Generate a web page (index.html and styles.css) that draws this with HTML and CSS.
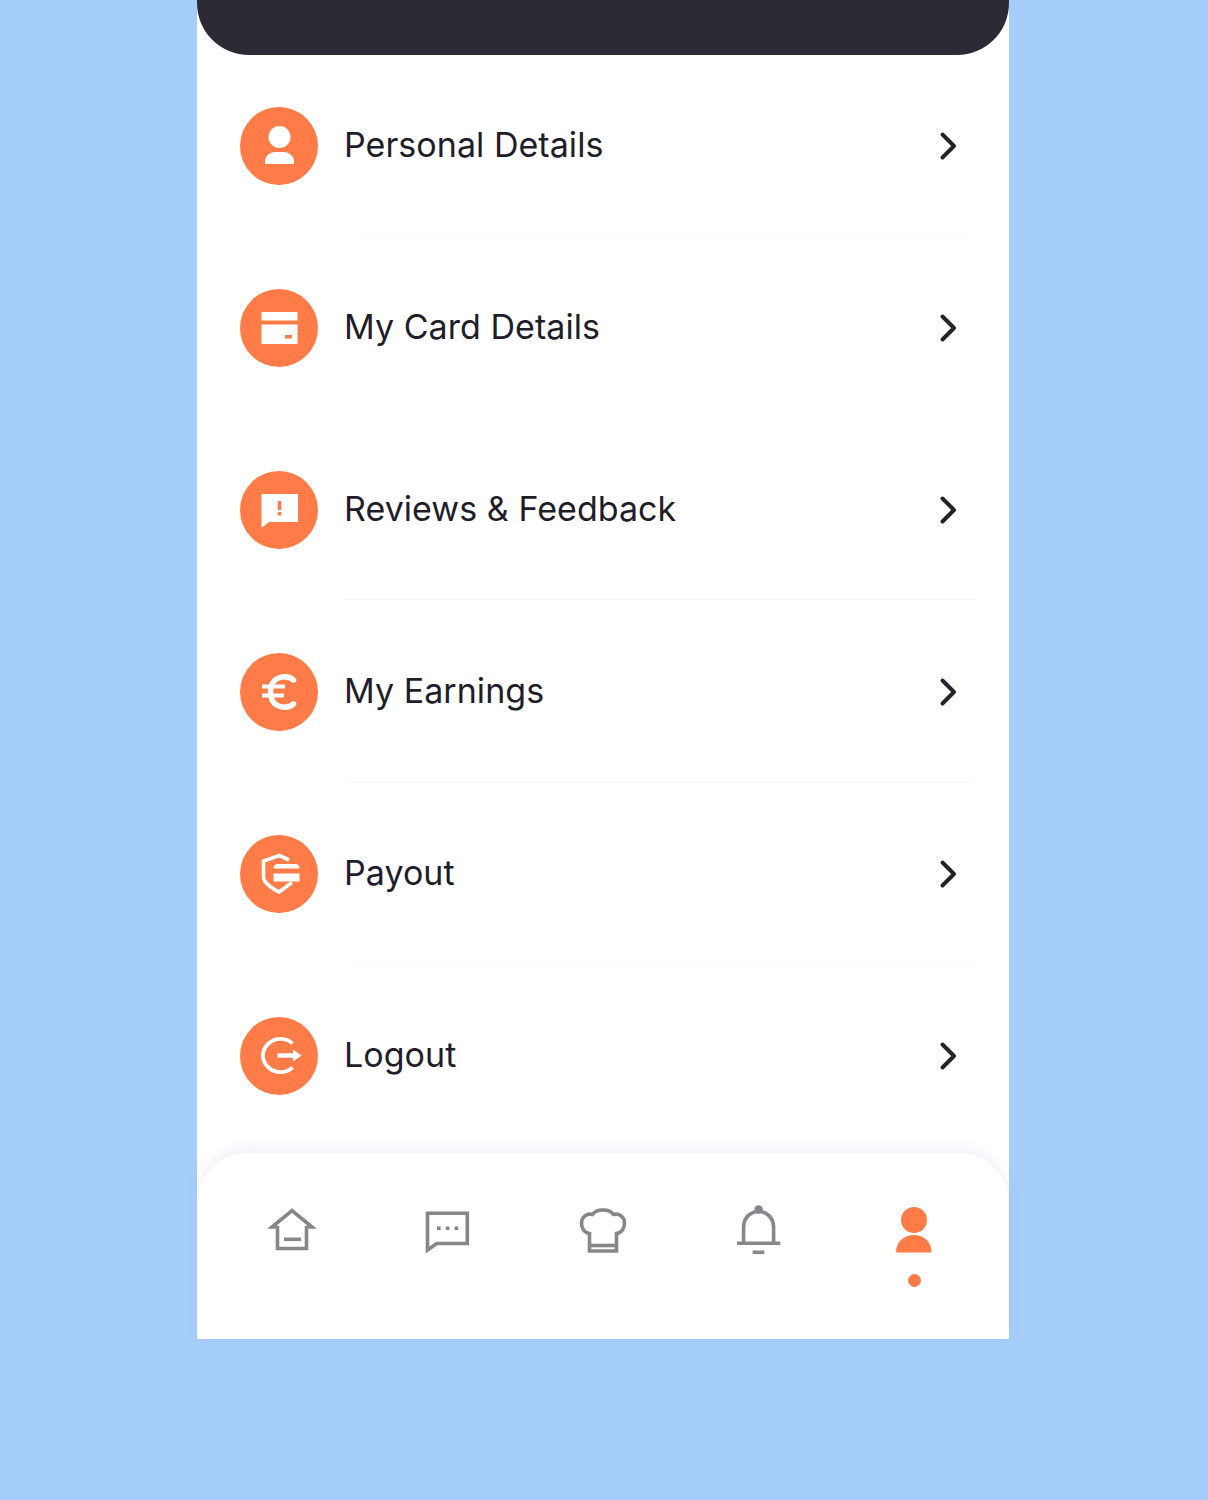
FILE: index.html
```html
<!DOCTYPE html>
<html lang="en">
<head>
    <meta charset="UTF-8">
    <meta name="viewport" content="width=device-width, initial-scale=1.0">
    <title>Profile</title>
    <link rel="stylesheet" href="styles.css">
</head>
<body>

    <div class="phone">
        <!-- TOP BAR -->
        <header class="top-bar"></header>

        <!-- MENU -->
        <main class="menu">
            <a href="#" class="menu-row">
                <span class="menu-icon">
                    <svg viewBox="0 0 78 78">
                        <circle cx="39.5" cy="30" r="11" fill="#fff"/>
                        <path d="M25 57V54C25 49 30 45 35 45H44C49 45 54 49 54 54V57Z" fill="#fff"/>
                    </svg>
                </span>
                <span class="menu-label">Personal Details</span>
                <svg class="chevron" viewBox="0 0 20 30"><path d="M4.5 3.5L16 15L4.5 26.5"/></svg>
            </a>
            <div class="divider divider-personal"></div>

            <a href="#" class="menu-row">
                <span class="menu-icon">
                    <svg viewBox="0 0 78 78">
                        <path d="M21.500 23H57.500V31.500H21.500Z" fill="#fff"/>
                        <path fill-rule="evenodd" d="M21.500 35.500H57.500V55H21.500ZM45 46V49.500H52V46Z" fill="#fff"/>
                    </svg>
                </span>
                <span class="menu-label">My Card Details</span>
                <svg class="chevron" viewBox="0 0 20 30"><path d="M4.5 3.5L16 15L4.5 26.5"/></svg>
            </a>
            <div class="divider divider-none"></div>

            <a href="#" class="menu-row">
                <span class="menu-icon">
                    <svg viewBox="0 0 78 78">
                        <path fill-rule="evenodd" d="M21.500 23H58V51H29L21.500 57ZM37.700 30V39H41.300V30ZM37.700 41V44.500H41.300V41Z" fill="#fff"/>
                    </svg>
                </span>
                <span class="menu-label">Reviews &amp; Feedback</span>
                <svg class="chevron" viewBox="0 0 20 30"><path d="M4.5 3.5L16 15L4.5 26.5"/></svg>
            </a>
            <div class="divider divider-reviews"></div>

            <a href="#" class="menu-row">
                <span class="menu-icon">
                    <svg viewBox="0 0 78 78">
                        <g fill="none" stroke="#fff" stroke-width="5.600">
                            <path d="M53.500 27C50 23.500 42 22.500 36.500 26C28.500 31 28.500 47 36.500 52C42 55.500 50 54.500 53.500 51" stroke-linecap="round"/>
                            <path d="M22 33.500H45M22 42.500H44" stroke-width="4"/>
                        </g>
                    </svg>
                </span>
                <span class="menu-label">My Earnings</span>
                <svg class="chevron" viewBox="0 0 20 30"><path d="M4.5 3.5L16 15L4.5 26.5"/></svg>
            </a>
            <div class="divider divider-earnings"></div>

            <a href="#" class="menu-row">
                <span class="menu-icon">
                    <svg viewBox="0 0 78 78">
                        <path d="M49 25L39.500 20.500L23.500 26V42C23.500 48 32 53 39 57L52 47.500" fill="none" stroke="#fff" stroke-width="3.600"/>
                        <path d="M33.500 33.500C33.500 30.500 35 29 38 29H56C58 29 59.500 31 59.500 33.500Z" fill="#fff"/>
                        <path d="M33.500 38.500H59.500V46.500H33.500Z" fill="#fff"/>
                    </svg>
                </span>
                <span class="menu-label">Payout</span>
                <svg class="chevron" viewBox="0 0 20 30"><path d="M4.5 3.5L16 15L4.5 26.5"/></svg>
            </a>
            <div class="divider divider-payout"></div>

            <a href="#" class="menu-row">
                <span class="menu-icon">
                    <svg viewBox="0 0 78 78">
                        <path d="M52.500 26.500C46 20 35 20.500 28.500 26.500C21 33.500 21 43.500 28.500 50.500C35 56.500 46 57 52.500 50.500" fill="none" stroke="#fff" stroke-width="3.800"/>
                        <path d="M37.500 36.300H53V32.500L61.500 38.500L53 44.500V40.700H37.500Z" fill="#fff"/>
                    </svg>
                </span>
                <span class="menu-label">Logout</span>
                <svg class="chevron" viewBox="0 0 20 30"><path d="M4.5 3.5L16 15L4.5 26.5"/></svg>
            </a>
        </main>

        <!-- TAB BAR -->
        <nav class="tab-bar">
            <a href="#" class="tab">
                <svg class="tab-icon" viewBox="0 0 50 50">
                    <path d="M10.500 22H5L25 5.500L45 22H39.500"/>
                    <path d="M10.500 21V43.500H39.500V21"/>
                    <path d="M17 34.300H34"/>
                </svg>
            </a>
            <a href="#" class="tab">
                <svg class="tab-icon" viewBox="0 0 50 50">
                    <path d="M5.500 8.300H45.300V38.500H14.800L5.500 45Z"/>
                    <path class="tab-dots" d="M15 23.300H36.800"/>
                </svg>
            </a>
            <a href="#" class="tab">
                <svg class="tab-icon" viewBox="0 0 50 50">
                    <path d="M11.500 46V28.500C6 27.500 3.500 23 3.500 18C3.500 12 9 8 14.500 9.500C16.500 6.500 20.500 5 25 5C29.500 5 33.500 6.500 35.500 9.500C41 8 46.500 12 46.500 18C46.500 23 44 27.500 38.500 28.500V46Z"/>
                    <path d="M11.500 40.500H38.500"/>
                </svg>
            </a>
            <a href="#" class="tab">
                <svg class="tab-icon" viewBox="0 0 50 50">
                    <circle class="tab-knob" cx="24.600" cy="4.500" r="4.200"/>
                    <path d="M9.600 38V22C9.600 13 16.300 6.500 24.600 6.500C32.800 6.500 39.600 13 39.600 22V38"/>
                    <path d="M3 38.300H46.300"/>
                    <path d="M18.600 47.300H30.300"/>
                </svg>
            </a>
            <a href="#" class="tab tab-active">
                <svg class="tab-icon" viewBox="0 0 50 50">
                    <circle cx="25" cy="15" r="13"/>
                    <path d="M7 47.500C7 37 15 30 25 30C35 30 42.500 37 42.500 47.500Z"/>
                </svg>
                <span class="tab-dot"></span>
            </a>
        </nav>
    </div>

</body>
</html>
```

FILE: styles.css
```css
body, html {
    margin: 0;
    padding: 0;
    height: 100%;
    font-family: 'Inter', sans-serif;
    background-color: #a6cefc;
    color: #1f1d2a;
}

body {
    display: flex;
    align-items: flex-start;
    padding-left: 197px;
    box-sizing: border-box;
}

.phone {
    width: 812px;
    height: 1339px;
    background-color: white;
    display: flex;
    flex-direction: column;
}

.top-bar {
    height: 55px;
    flex-shrink: 0;
    background-color: #2c2a35;
    border-radius: 0 0 52px 52px;
}

/* Menu */
.menu {
    flex: 1;
    padding: 52px 51px 0 43px;
}

.menu-row {
    display: flex;
    align-items: center;
    height: 78px;
    color: inherit;
    text-decoration: none;
}

.menu-icon {
    width: 78px;
    height: 78px;
    flex-shrink: 0;
    border-radius: 50%;
    background-color: #ff7b47;
}

.menu-icon svg {
    display: block;
    width: 78px;
    height: 78px;
}

.menu-label {
    flex: 1;
    margin-left: 26px;
    padding-bottom: 4px;
    font-size: 34px;
    font-weight: 400;
    letter-spacing: 0.05px;
}

.chevron {
    width: 20px;
    height: 30px;
    fill: none;
    stroke: #24222d;
    stroke-width: 4;
    stroke-linecap: round;
    stroke-linejoin: round;
}

.divider {
    height: 1px;
    margin: 50px 0 53px;
    background-color: #f6f5f8;
}

.divider-personal {
    margin-left: 120px;
    margin-right: -10px;
}

.divider-none {
    background-color: transparent;
}

.divider-reviews {
    margin-left: 105px;
    margin-right: -17px;
}

.divider-earnings {
    margin-top: 51px;
    margin-bottom: 52px;
    margin-left: 110px;
    margin-right: -17px;
}

.divider-payout {
    margin-left: 112px;
    margin-right: -14px;
}

/* Tab bar */
.tab-bar {
    height: 186px;
    flex-shrink: 0;
    box-sizing: border-box;
    padding: 52px 17px 0;
    display: grid;
    grid-template-columns: repeat(5, 1fr);
    align-items: start;
    background-color: white;
    border-radius: 50px 50px 0 0;
    box-shadow: 0 -5px 12px rgba(140, 100, 190, 0.1);
}

.tab {
    display: flex;
    flex-direction: column;
    align-items: center;
}

.tab-icon {
    width: 50px;
    height: 50px;
    fill: none;
    stroke: #86868b;
    stroke-width: 3.6;
}

.tab-dots {
    stroke-width: 3.6;
    stroke-dasharray: 3.6 5.2;
}

.tab-knob {
    fill: #86868b;
    stroke: none;
}

.tab-active .tab-icon {
    fill: #ff7b47;
    stroke: none;
}

.tab-dot {
    width: 13px;
    height: 13px;
    margin-top: 19px;
    border-radius: 50%;
    background-color: #ff7b47;
}
```
